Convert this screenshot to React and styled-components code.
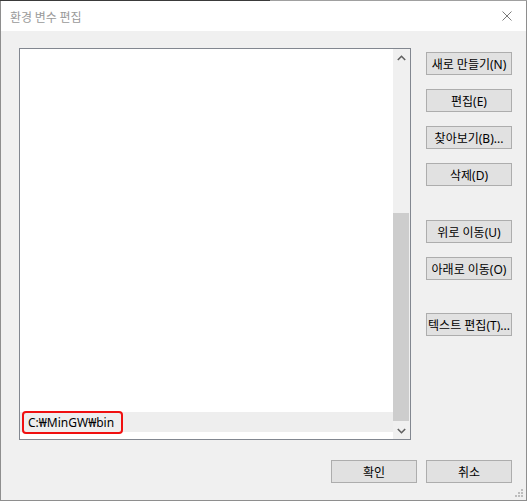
import React from "react";
import styled, { createGlobalStyle } from "styled-components";

const Global = createGlobalStyle`
  html, body { margin: 0; padding: 0; background: #f0f0f0; }
  body { font-family: "Noto Sans", "Noto Sans CJK KR", sans-serif; }
`;

const Window = styled.div`
  position: relative;
  width: 527px;
  height: 501px;
  box-sizing: border-box;
  border: 1px solid #8e8e8e;
  border-top: none;
  display: flex;
  flex-direction: column;
  background: #f0f0f0;
`;

const TopEdge = styled.div`
  height: 1px;
  background: linear-gradient(to right, #3a3a3a 0, #3a3a3a 270px, #a0a0a0 270px, #a0a0a0 100%);
  margin: 0 -1px;
`;

const TitleBar = styled.div`
  height: 30px;
  background: #ffffff;
  display: flex;
  align-items: center;
  justify-content: space-between;
  padding: 0 14px 0 9px;
  font-family: "Noto Sans CJK KR", sans-serif;
  font-size: 12px;
  color: #9a9a9a;
`;

const CloseIcon = () => (
  <svg width="10" height="10" viewBox="0 0 10 10">
    <path d="M0.5 0.5 L9.5 9.5 M9.5 0.5 L0.5 9.5" stroke="#7a7a7a" strokeWidth="1" fill="none" />
  </svg>
);

const Body = styled.div`
  flex: 1;
  display: grid;
  grid-template-columns: 392px 86px;
  grid-template-rows: 392px auto;
  column-gap: 15px;
  padding: 17px 14px 0 18px;
`;

const ListBox = styled.div`
  box-sizing: border-box;
  border: 1px solid #828790;
  background: #ffffff;
  display: flex;
`;

const ListContent = styled.div`
  flex: 1;
  display: flex;
  flex-direction: column;
  justify-content: flex-end;
  padding-bottom: 7px;
`;

const Row = styled.div`
  height: 20px;
  background: ${(p) => (p.$selected ? "#eeeeee" : "transparent")};
  display: flex;
  align-items: center;
  padding-left: 2px;
`;

const Marked = styled.span`
  box-sizing: border-box;
  height: 23px;
  display: inline-flex;
  align-items: center;
  padding: 0 7px 0 4px;
  border: 2px solid #f01010;
  border-radius: 4px;
  font-family: "Noto Sans", "Noto Sans CJK KR", sans-serif;
  font-size: 12px;
  color: #000;
  white-space: nowrap;
`;

const ScrollBar = styled.div`
  width: 17px;
  background: #f0f0f0;
  display: flex;
  flex-direction: column;
`;

const ScrollArrow = styled.div`
  height: 17px;
  display: flex;
  align-items: center;
  justify-content: center;
`;

const ScrollSpace = styled.div`
  flex: ${(p) => p.$flex};
`;

const Thumb = styled.div`
  height: 208px;
  width: 16px;
  background: #cdcdcd;
`;

const Chevron = ({ down }) => (
  <svg width="9" height="6" viewBox="0 0 9 6">
    <path
      d={down ? "M0.8 1 L4.5 4.7 L8.2 1" : "M0.8 5 L4.5 1.3 L8.2 5"}
      stroke="#606060"
      strokeWidth="1.6"
      fill="none"
    />
  </svg>
);

const ButtonColumn = styled.div`
  display: flex;
  flex-direction: column;
  padding-top: 4px;
`;

const Button = styled.button`
  box-sizing: border-box;
  width: 86px;
  height: 23px;
  margin: 0;
  margin-top: ${(p) => p.$gap || 0}px;
  padding: 0;
  background: #e1e1e1;
  border: 1px solid #adadad;
  font-family: "Noto Sans", "Noto Sans CJK KR", sans-serif;
  font-size: 12px;
  color: #000;
  white-space: nowrap;
  display: flex;
  align-items: center;
  justify-content: center;
`;

const Footer = styled.div`
  grid-column: 1 / -1;
  justify-self: end;
  display: flex;
  gap: 9px;
  margin-top: 20px;
`;

const Grip = styled.svg`
  position: absolute;
  right: 3px;
  bottom: 3px;
`;

const sideButtons = [
  { label: "새로 만들기(N)", gap: 0 },
  { label: "편집(E)", gap: 14 },
  { label: "찾아보기(B)...", gap: 14 },
  { label: "삭제(D)", gap: 14 },
  { label: "위로 이동(U)", gap: 34 },
  { label: "아래로 이동(O)", gap: 14 },
  { label: "텍스트 편집(T)...", gap: 33 },
];

export default function App() {
  return (
    <>
      <Global />
      <Window>
        <TopEdge />
        <TitleBar>
          <span>환경 변수 편집</span>
          <CloseIcon />
        </TitleBar>
        <Body>
          <ListBox>
            <ListContent>
              <Row $selected>
                <Marked>C:₩MinGW₩bin</Marked>
              </Row>
            </ListContent>
            <ScrollBar>
              <ScrollArrow>
                <Chevron />
              </ScrollArrow>
              <ScrollSpace $flex={147} />
              <Thumb />
              <ScrollSpace $flex={1} />
              <ScrollArrow>
                <Chevron down />
              </ScrollArrow>
            </ScrollBar>
          </ListBox>
          <ButtonColumn>
            {sideButtons.map((b) => (
              <Button key={b.label} $gap={b.gap}>
                {b.label}
              </Button>
            ))}
          </ButtonColumn>
          <Footer>
            <Button>확인</Button>
            <Button>취소</Button>
          </Footer>
        </Body>
        <Grip width="8" height="8" viewBox="0 0 8 8">
          <g fill="#bdbdbd">
            <rect x="6" y="0" width="2" height="2" />
            <rect x="3" y="3" width="2" height="2" />
            <rect x="6" y="3" width="2" height="2" />
            <rect x="0" y="6" width="2" height="2" />
            <rect x="3" y="6" width="2" height="2" />
            <rect x="6" y="6" width="2" height="2" />
          </g>
        </Grip>
      </Window>
    </>
  );
}
